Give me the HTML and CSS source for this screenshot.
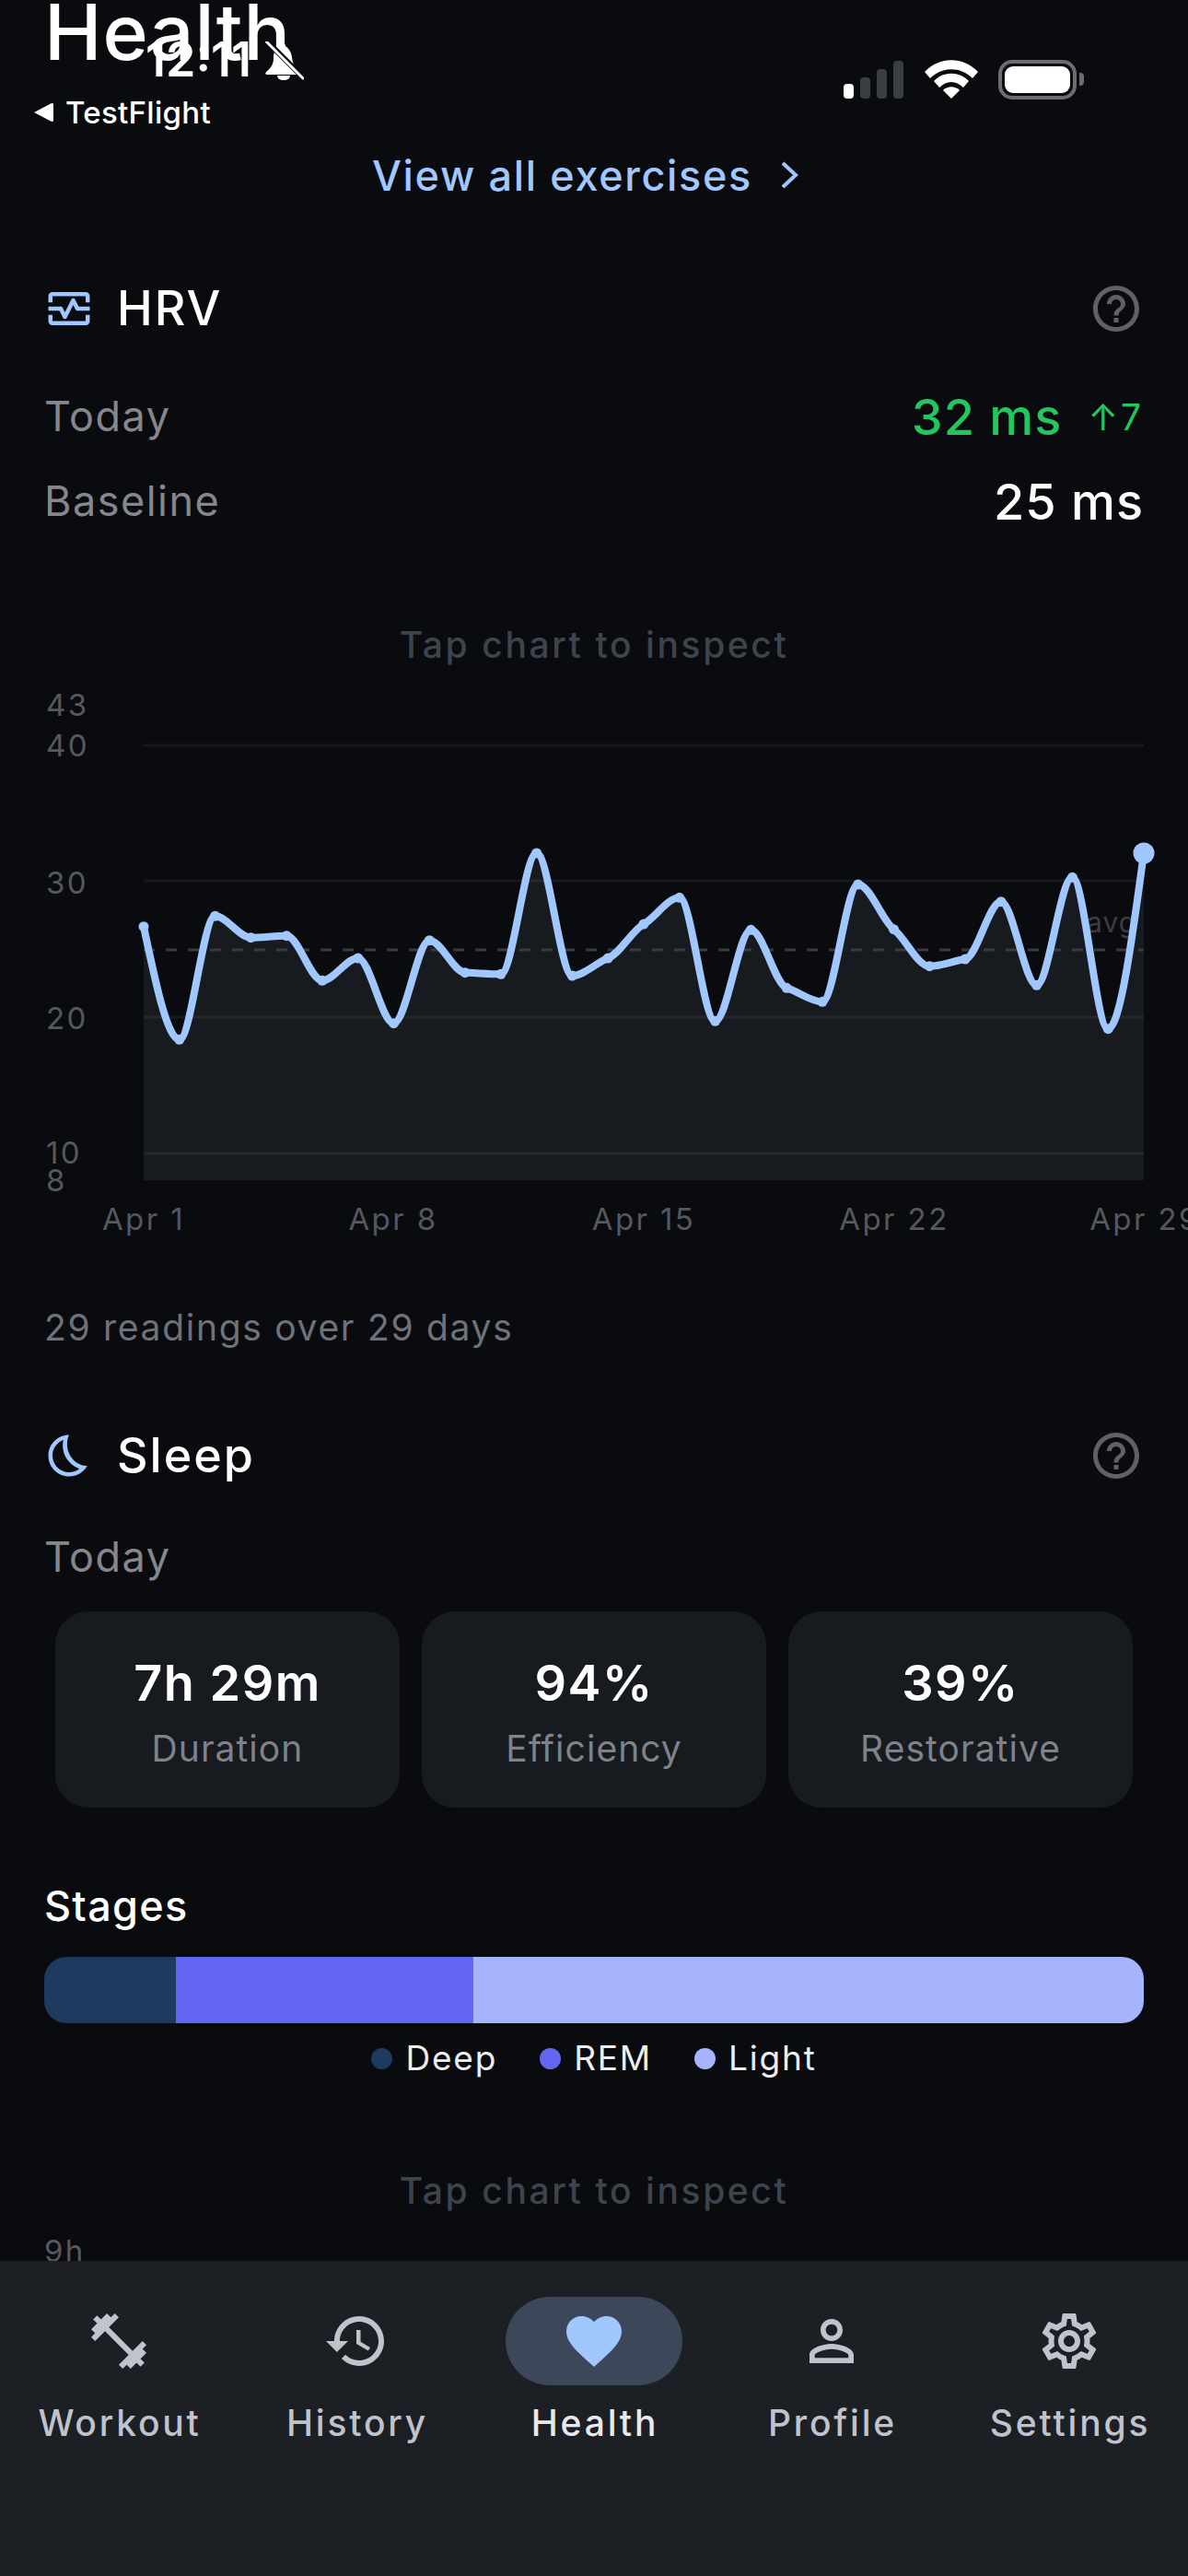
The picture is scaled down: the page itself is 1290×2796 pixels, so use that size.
FILE: index.html
```html
<!DOCTYPE html>
<html lang="en">
<head>
    <meta charset="UTF-8">
    <meta name="viewport" content="width=device-width, initial-scale=1.0">
    <title>Health</title>
    <link rel="stylesheet" href="styles.css">
</head>
<body>
<div class="screen">

    <!-- iOS status bar sits over the scrolled content -->
    <div class="status-bar">
        <div class="status-left">
            <div class="clock-row">
                <span class="clock">12:11</span>
                <svg class="bell" viewBox="0 0 42 42">
                    <path d="M20 2c-2 0-3 1-3 3-6 2-8 7-8 13 0 6-2 10-8 15-1 1-1 3 1 3h34c2 0 2-2 1-3-5-5-7-9-8-15 0-6-4-11-7-13 0-2-1-3-2-3z" fill="#fff"/>
                    <path d="M13 37h14c0 3-3 5-7 5s-7-2-7-5z" fill="#fff"/>
                    <path d="M-1 -3L40 38" stroke="#0a0b0e" stroke-width="6"/>
                    <path d="M1 0L41 40" stroke="#fff" stroke-width="3" stroke-linecap="round"/>
                </svg>
            </div>
            <div class="back-row">
                <svg class="back-arrow" viewBox="0 0 22 22"><path d="M1 11L20 1c1 0 2 0 2 2v16c0 2-1 2-2 2z" fill="#fff"/></svg>
                <span>TestFlight</span>
            </div>
        </div>
        <div class="status-right">
            <div class="signal">
                <i class="bar-1"></i><i class="bar-2"></i><i class="bar-3"></i><i class="bar-4"></i>
            </div>
            <svg class="wifi" viewBox="0 0 58 42">
                <path d="M0 13C16 -4 42 -4 58 13L52 20C39 7 19 7 6 20z" fill="#fff"/>
                <path d="M10 23C20 12 38 12 48 23L42 30C34 22 24 22 16 30z" fill="#fff"/>
                <path d="M20 33C25 28 33 28 38 33L29 42z" fill="#fff"/>
            </svg>
            <div class="battery"><div class="battery-fill"></div></div>
            <div class="battery-cap"></div>
        </div>
    </div>

    <div class="scroll">
        <h1 class="page-title">Health</h1>

        <div class="view-all">
            <span>View all exercises</span>
            <svg class="chevron" viewBox="0 0 20 32"><path d="M3 3L17 16L3 29" fill="none" stroke="#a0c8ff" stroke-width="4"/></svg>
        </div>

        <div class="section-head hrv-head">
            <div class="section-name">
                <svg class="section-icon" viewBox="0 0 24 24"><path d="M20 4H4C2.9 4 2 4.9 2 6v3h2V6h16v3h2V6C22 4.9 21.1 4 20 4z M20 18H4v-3H2v3c0 1.1 0.9 2 2 2h16c1.1 0 2-0.9 2-2v-3h-2V18z M14.89 7.55c-0.34-0.68-1.45-0.68-1.79 0L10 13.76l-1.11-2.21C8.72 11.21 8.38 11 8 11H2v2h5.38l1.72 3.45C9.28 16.79 9.62 17 10 17s0.72-0.21 0.89-0.55L14 10.24l1.11 2.21c0.17 0.34 0.51 0.55 0.89 0.55h6v-2h-5.38L14.89 7.55z"/></svg>
                <h2>HRV</h2>
            </div>
            <svg class="help" viewBox="0 0 24 24"><path d="M11 18h2v-2h-2v2zm1-16C6.48 2 2 6.48 2 12s4.48 10 10 10 10-4.48 10-10S17.52 2 12 2zm0 18c-4.41 0-8-3.59-8-8s3.59-8 8-8 8 3.59 8 8-3.59 8-8 8zm0-14c-2.21 0-4 1.79-4 4h2c0-1.1.9-2 2-2s2 .9 2 2c0 2-3 1.75-3 5h2c0-2.25 3-2.5 3-5 0-2.21-1.79-4-4-4z"/></svg>
        </div>

        <div class="stat-row first-row">
            <span class="stat-label">Today</span>
            <div class="stat-right">
                <span class="stat-value good">32 ms</span>
                <span class="stat-delta">↑7</span>
            </div>
        </div>
        <div class="stat-row second-row">
            <span class="stat-label">Baseline</span>
            <span class="stat-value">25 ms</span>
        </div>

        <p class="tap-hint hint-hrv">Tap chart to inspect</p>

        <svg class="chart" id="hrv-chart" viewBox="0 740 1290 640">
            <path id="chart-area" fill="#171b20"/>
            <g class="grid">
                <line x1="156" x2="1242" y1="809" y2="809"/>
                <line x1="156" x2="1242" y1="956" y2="956"/>
                <line x1="156" x2="1242" y1="1104" y2="1104"/>
                <line x1="156" x2="1242" y1="1252" y2="1252"/>
            </g>
            <line class="avg-line" x1="156" x2="1242" y1="1031" y2="1031"/>
            <text class="avg-label" x="1180" y="1012">avg</text>
            <g class="y-labels">
                <text x="50" y="777">43</text>
                <text x="50" y="821">40</text>
                <text x="50" y="970">30</text>
                <text x="50" y="1117">20</text>
                <text x="50" y="1263">10</text>
                <text x="50" y="1293">8</text>
            </g>
            <g class="x-labels">
                <text x="156" y="1335">Apr 1</text>
                <text x="427" y="1335">Apr 8</text>
                <text x="699" y="1335">Apr 15</text>
                <text x="971" y="1335">Apr 22</text>
                <text x="1243" y="1335">Apr 29</text>
            </g>
            <path id="chart-line" fill="none" stroke="#a0c8ff" stroke-width="8" stroke-linecap="round"/>
            <g id="chart-dots" fill="#a0c8ff"></g>
        </svg>

        <p class="readings">29 readings over 29 days</p>

        <div class="section-head sleep-head">
            <div class="section-name">
                <svg class="section-icon" viewBox="0 0 24 24"><path d="M9.27 4.49c-1.63 7.54 3.75 12.41 7.66 13.8C15.54 19.38 13.81 20 12.01 20c-4.41 0-8-3.59-8-8 0-3.45 2.2-6.4 5.26-7.51m2.72-2.48C6.4 2.01 2.01 6.54 2.01 12c0 5.52 4.48 10 10 10 3.71 0 6.93-2.02 8.75-5.02-7.52-.29-11.69-8.69-8.77-14.97z"/></svg>
                <h2>Sleep</h2>
            </div>
            <svg class="help" viewBox="0 0 24 24"><path d="M11 18h2v-2h-2v2zm1-16C6.48 2 2 6.48 2 12s4.48 10 10 10 10-4.48 10-10S17.52 2 12 2zm0 18c-4.41 0-8-3.59-8-8s3.59-8 8-8 8 3.59 8 8-3.59 8-8 8zm0-14c-2.21 0-4 1.79-4 4h2c0-1.1.9-2 2-2s2 .9 2 2c0 2-3 1.75-3 5h2c0-2.25 3-2.5 3-5 0-2.21-1.79-4-4-4z"/></svg>
        </div>

        <div class="sleep-today stat-label">Today</div>

        <div class="cards">
            <div class="card">
                <div class="card-value">7h 29m</div>
                <div class="card-label">Duration</div>
            </div>
            <div class="card">
                <div class="card-value">94%</div>
                <div class="card-label">Efficiency</div>
            </div>
            <div class="card">
                <div class="card-value">39%</div>
                <div class="card-label">Restorative</div>
            </div>
        </div>

        <h3 class="stages-title">Stages</h3>
        <div class="stages-bar">
            <div class="stage-deep"></div>
            <div class="stage-rem"></div>
            <div class="stage-light"></div>
        </div>
        <div class="legend">
            <div class="legend-item"><i class="stage-deep"></i>Deep</div>
            <div class="legend-item"><i class="stage-rem"></i>REM</div>
            <div class="legend-item"><i class="stage-light"></i>Light</div>
        </div>

        <p class="tap-hint hint-sleep">Tap chart to inspect</p>
        <div class="cut-label">9h</div>
    </div>

    <nav class="tabs">
        <div class="tab">
            <div class="tab-icon">
                <svg viewBox="0 0 24 24"><path d="M20.57 14.86L22 13.43 20.57 12 17 15.57 8.43 7 12 3.43 10.57 2 9.14 3.43 7.71 2 5.57 4.14 4.14 2.71 2.71 4.14l1.43 1.43L2 7.71l1.43 1.43L2 10.57 3.43 12 7 8.43 15.57 17 12 20.57 13.43 22l1.43-1.43L16.29 22l2.14-2.14 1.43 1.43 1.43-1.43-1.43-1.43L22 16.29z"/></svg>
            </div>
            <span>Workout</span>
        </div>
        <div class="tab">
            <div class="tab-icon">
                <svg viewBox="0 0 24 24"><path d="M13 3c-4.97 0-9 4.03-9 9H1l3.89 3.89.07.14L9 12H6c0-3.87 3.13-7 7-7s7 3.13 7 7-3.13 7-7 7c-1.93 0-3.68-.79-4.94-2.06l-1.42 1.42C8.27 19.99 10.51 21 13 21c4.97 0 9-4.03 9-9s-4.03-9-9-9zm-1 5v5l4.28 2.54.72-1.21-3.5-2.08V8H12z"/></svg>
            </div>
            <span>History</span>
        </div>
        <div class="tab active">
            <div class="tab-icon">
                <svg viewBox="0 0 24 24"><path d="M12 21.35l-1.45-1.32C5.4 15.36 2 12.28 2 8.5 2 5.42 4.42 3 7.5 3c1.74 0 3.41.81 4.5 2.09C13.09 3.81 14.76 3 16.5 3 19.58 3 22 5.42 22 8.5c0 3.78-3.4 6.86-8.55 11.54L12 21.35z"/></svg>
            </div>
            <span>Health</span>
        </div>
        <div class="tab">
            <div class="tab-icon">
                <svg viewBox="0 0 24 24"><path d="M12 5.9c1.16 0 2.1.94 2.1 2.1s-.94 2.1-2.1 2.1S9.9 9.16 9.9 8s.94-2.1 2.1-2.1m0 9c2.97 0 6.1 1.46 6.1 2.1v1.1H5.9V17c0-.64 3.13-2.1 6.1-2.1M12 4C9.79 4 8 5.79 8 8s1.79 4 4 4 4-1.79 4-4-1.79-4-4-4zm0 9c-2.67 0-8 1.34-8 4v3h16v-3c0-2.66-5.33-4-8-4z"/></svg>
            </div>
            <span>Profile</span>
        </div>
        <div class="tab">
            <div class="tab-icon">
                <svg viewBox="0 0 24 24"><path d="M19.43 12.98c.04-.32.07-.64.07-.98 0-.34-.03-.66-.07-.98l2.11-1.65c.19-.15.24-.42.12-.64l-2-3.46c-.09-.16-.26-.25-.44-.25-.06 0-.12.01-.17.03l-2.49 1c-.52-.4-1.08-.73-1.69-.98l-.38-2.65C14.46 2.18 14.25 2 14 2h-4c-.25 0-.46.18-.49.42l-.38 2.65c-.61.25-1.17.59-1.69.98l-2.49-1c-.06-.02-.12-.03-.18-.03-.17 0-.34.09-.43.25l-2 3.46c-.13.22-.07.49.12.64l2.11 1.65c-.04.32-.07.65-.07.98 0 .33.03.66.07.98l-2.11 1.65c-.19.15-.24.42-.12.64l2 3.46c.09.16.26.25.44.25.06 0 .12-.01.17-.03l2.49-1c.52.4 1.08.73 1.69.98l.38 2.65c.03.24.24.42.49.42h4c.25 0 .46-.18.49-.42l.38-2.65c.61-.25 1.17-.59 1.69-.98l2.49 1c.06.02.12.03.18.03.17 0 .34-.09.43-.25l2-3.46c.12-.22.07-.49-.12-.64l-2.11-1.65zm-1.98-1.71c.04.31.05.52.05.73 0 .21-.02.43-.05.73l-.14 1.13.89.7 1.08.84-.7 1.21-1.27-.51-1.04-.42-.9.68c-.43.32-.84.56-1.25.73l-1.06.43-.16 1.13-.2 1.35h-1.4l-.19-1.35-.16-1.13-1.06-.43c-.43-.18-.83-.41-1.23-.71l-.91-.7-1.06.43-1.27.51-.7-1.21 1.08-.84.89-.7-.14-1.13c-.03-.31-.05-.54-.05-.74s.02-.43.05-.73l.14-1.13-.89-.7-1.08-.84.7-1.21 1.27.51 1.04.42.9-.68c.43-.32.84-.56 1.25-.73l1.06-.43.16-1.13.2-1.35h1.39l.19 1.35.16 1.13 1.06.43c.43.18.83.41 1.23.71l.91.7 1.06-.43 1.27-.51.7 1.21-1.07.85-.89.7.14 1.13zM12 8c-2.21 0-4 1.79-4 4s1.79 4 4 4 4-1.79 4-4-1.79-4-4-4zm0 6c-1.1 0-2-.9-2-2s.9-2 2-2 2 .9 2 2-.9 2-2 2z"/></svg>
            </div>
            <span>Settings</span>
        </div>
    </nav>
</div>
<script src="chart.js"></script>
</body>
</html>
```

FILE: styles.css
```css
* {
    box-sizing: border-box;
}

body {
    margin: 0;
    background-color: #0a0b0e;
    font-family: Inter, "Noto Sans", sans-serif;
    color: #fff;
}

.screen {
    position: relative;
    width: 1290px;
    height: 2796px;
    overflow: hidden;
    display: flex;
    flex-direction: column;
}

/* status bar */
.status-bar {
    position: absolute;
    top: 0;
    left: 0;
    right: 0;
    height: 150px;
    display: flex;
    justify-content: space-between;
}

.status-left {
    padding-left: 36px;
}

.clock-row {
    display: flex;
    align-items: flex-end;
    height: 87px;
    padding-left: 122px;
    gap: 15px;
}

.clock {
    font-size: 52px;
    line-height: 54px;
    font-weight: 600;
    margin-bottom: -5px;
}

.bell {
    width: 42px;
    height: 42px;
}

.back-row {
    display: flex;
    align-items: center;
    gap: 13px;
    margin-top: 15px;
    font-size: 33px;
    line-height: 40px;
    font-weight: 500;
    letter-spacing: 0.3px;
}

.back-arrow {
    width: 22px;
    height: 22px;
}

.status-right {
    display: flex;
    align-items: flex-start;
    padding: 65px 113px 0 0;
}

.signal {
    display: flex;
    align-items: flex-end;
    gap: 7px;
    height: 42px;
}

.signal i {
    width: 11px;
    background-color: #3a3e41;
    border-radius: 4px;
}

.signal .bar-1 { height: 16px; background-color: #fff; }
.signal .bar-2 { height: 23px; }
.signal .bar-3 { height: 32px; }
.signal .bar-4 { height: 41px; }

.wifi {
    width: 58px;
    height: 42px;
    margin-left: 23px;
}

.battery {
    width: 85px;
    height: 43px;
    margin-left: 22px;
    padding: 3px;
    border: 4px solid #6b6d72;
    border-radius: 15px;
}

.battery-fill {
    width: 100%;
    height: 100%;
    background-color: #fff;
    border-radius: 9px;
}

.battery-cap {
    width: 5px;
    height: 14px;
    margin: 14px 0 0 3px;
    background-color: #6b6d72;
    border-radius: 0 4px 4px 0;
}

/* scrolled content */
.scroll {
    flex: 1;
    min-height: 0;
    overflow: hidden;
}

.page-title {
    margin: -15px 0 0 48px;
    font-size: 84px;
    line-height: 100px;
    font-weight: 500;
    letter-spacing: 1px;
}

.view-all {
    display: flex;
    justify-content: center;
    align-items: center;
    gap: 30px;
    margin-top: 75px;
    height: 60px;
    padding-right: 19px;
    font-size: 45px;
    font-weight: 500;
    letter-spacing: 1.65px;
    color: #a0c8ff;
}

.chevron {
    width: 20px;
    height: 32px;
}

.section-head {
    display: flex;
    justify-content: space-between;
    align-items: center;
    height: 60px;
    padding: 0 48px;
}

.hrv-head {
    margin-top: 85px;
}

.sleep-head {
    margin-top: 84px;
}

.section-name {
    display: flex;
    align-items: center;
    gap: 25px;
}

.section-icon {
    width: 54px;
    height: 54px;
    fill: #a0c8ff;
}

.section-name h2 {
    margin: 0;
    font-size: 52px;
    line-height: 60px;
    font-weight: 500;
    letter-spacing: 2px;
}

.help {
    width: 60px;
    height: 60px;
    fill: #5f6166;
}

.stat-row {
    display: flex;
    justify-content: space-between;
    align-items: center;
    height: 60px;
    padding: 0 48px;
}

.first-row {
    margin-top: 57px;
}

.second-row {
    margin-top: 32px;
}

.stat-label {
    font-size: 45px;
    line-height: 60px;
    letter-spacing: 1.5px;
    color: #85878d;
}

.stat-right {
    display: flex;
    align-items: center;
    gap: 28px;
}

.stat-value {
    font-size: 54px;
    font-weight: 500;
    letter-spacing: 1px;
}

.good {
    color: #22c55e;
}

.stat-delta {
    font-size: 39px;
    letter-spacing: 3px;
    color: #22c55e;
}

.tap-hint {
    margin: 0;
    height: 50px;
    text-align: center;
    font-size: 39px;
    line-height: 50px;
    font-weight: 500;
    letter-spacing: 2.6px;
    color: #3e444e;
}

.hint-hrv {
    margin-top: 101px;
}

.hint-sleep {
    margin-top: 94px;
}

/* chart */
.chart {
    display: block;
    width: 1290px;
    height: 640px;
    margin-top: 15px;
}

.grid line {
    stroke: rgba(255, 255, 255, 0.06);
    stroke-width: 3;
}

.avg-line {
    stroke: #383b3f;
    stroke-width: 3;
    stroke-dasharray: 12 12;
}

.avg-label {
    font-size: 30px;
    letter-spacing: 1px;
    fill: #3c3e42;
}

.y-labels text,
.x-labels text {
    font-size: 33px;
    letter-spacing: 2.4px;
    fill: #55585e;
}

.x-labels text {
    text-anchor: middle;
}

.readings {
    margin: 36px 0 0;
    padding-left: 48px;
    font-size: 39px;
    line-height: 50px;
    letter-spacing: 1.7px;
    color: #6f727a;
}

.sleep-today {
    margin-top: 50px;
    padding-left: 48px;
}

/* sleep cards */
.cards {
    display: flex;
    gap: 24px;
    margin-top: 29px;
    padding: 0 60px;
}

.card {
    flex: 1;
    padding: 43px 0 39px;
    background-color: #171a1f;
    border-radius: 36px;
    text-align: center;
}

.card-value {
    font-size: 54px;
    line-height: 70px;
    font-weight: 600;
    letter-spacing: 1.5px;
}

.card-label {
    margin-top: 11px;
    font-size: 39px;
    line-height: 50px;
    letter-spacing: 1.05px;
    color: #7f8288;
}

.stages-title {
    margin: 77px 0 0;
    padding-left: 48px;
    font-size: 45px;
    line-height: 60px;
    font-weight: 500;
    letter-spacing: 1.3px;
}

.stages-bar {
    display: flex;
    height: 72px;
    margin: 25px 48px 0;
    border-radius: 24px;
    overflow: hidden;
}

.stages-bar .stage-deep { width: 143px; }
.stages-bar .stage-rem { width: 323px; }
.stages-bar .stage-light { flex: 1; }

.stage-deep { background-color: #1e3a5f; }
.stage-rem { background-color: #6366f1; }
.stage-light { background-color: #a5b4fc; }

.legend {
    display: flex;
    justify-content: center;
    gap: 46px;
    margin-top: 13px;
    height: 50px;
}

.legend-item {
    display: flex;
    align-items: center;
    gap: 14px;
    font-size: 37px;
    line-height: 50px;
    letter-spacing: 1.8px;
    color: #eceef0;
}

.legend-item i {
    width: 23px;
    height: 23px;
    border-radius: 50%;
}

.cut-label {
    margin-top: 20px;
    padding-left: 48px;
    font-size: 33px;
    line-height: 40px;
    letter-spacing: 2.4px;
    color: #55585e;
}

/* bottom tabs */
.tabs {
    display: flex;
    height: 342px;
    padding-top: 39px;
    background-color: #1c2025;
}

.tab {
    width: 258px;
    display: flex;
    flex-direction: column;
    align-items: center;
    gap: 16px;
    font-size: 39px;
    line-height: 50px;
    font-weight: 500;
    letter-spacing: 2.8px;
    color: #c0c3cc;
}

.tab span {
    margin-left: 2px;
}

.tab-icon {
    display: flex;
    justify-content: center;
    align-items: center;
    width: 192px;
    height: 96px;
    border-radius: 48px;
}

.tab-icon svg {
    width: 72px;
    height: 72px;
    fill: #c0c3cc;
}

.tab.active {
    color: #e8e9ee;
}

.tab.active .tab-icon {
    background-color: #3c4859;
}

.tab.active .tab-icon svg {
    fill: #a0c8ff;
}
```

FILE: chart.js
```js
// y pixel of each reading, read off the 29 day series
const readings = [1005.7, 1128.3, 994.3, 1017.7, 1015.7, 1064.3, 1040, 1110.7, 1020.7, 1055.7, 1057.3, 926,
    1059, 1040, 1003, 974.3, 1108.3, 1009.3, 1072.3, 1087.3, 960, 1008.7, 1048.7, 1041, 978.7, 1069.3, 952.3, 1116.7, 926];

const startX = 156;
const stepX = 38.786;
const bottomY = 1281;

const points = readings.map((y, i) => [startX + i * stepX, y]);

// flat at the peaks and dips, shallow everywhere else so the points show as small kinks
function slopes(pts) {
    const last = pts.length - 1;
    const s = [];
    for (let i = 1; i < last; i++) {
        const a = (pts[i][1] - pts[i - 1][1]) / stepX;
        const b = (pts[i + 1][1] - pts[i][1]) / stepX;
        s[i] = a * b <= 0 ? 0 : Math.sign(a) * Math.min(Math.abs(a), Math.abs(b)) * 0.75;
    }
    s[0] = (pts[1][1] - pts[0][1]) / stepX * 1.5 - s[1] / 2;
    s[last] = (pts[last][1] - pts[last - 1][1]) / stepX * 1.5 - s[last - 1] / 2;
    return s;
}

const s = slopes(points);
const third = stepX / 3;
let d = `M${points[0][0]} ${points[0][1]}`;
for (let i = 1; i < points.length; i++) {
    const p = points[i - 1];
    const q = points[i];
    d += `C${p[0] + third} ${p[1] + s[i - 1] * third} ${q[0] - third} ${q[1] - s[i] * third} ${q[0]} ${q[1]}`;
}

document.getElementById('chart-line').setAttribute('d', d);
document.getElementById('chart-area').setAttribute('d', `${d}L${points[28][0]} ${bottomY}L${startX} ${bottomY}Z`);

const dots = document.getElementById('chart-dots');
points.forEach((p, i) => {
    const dot = document.createElementNS('http://www.w3.org/2000/svg', 'circle');
    dot.setAttribute('cx', p[0]);
    dot.setAttribute('cy', p[1]);
    dot.setAttribute('r', i === 28 ? 11.5 : 5.5);
    dots.appendChild(dot);
});
```
